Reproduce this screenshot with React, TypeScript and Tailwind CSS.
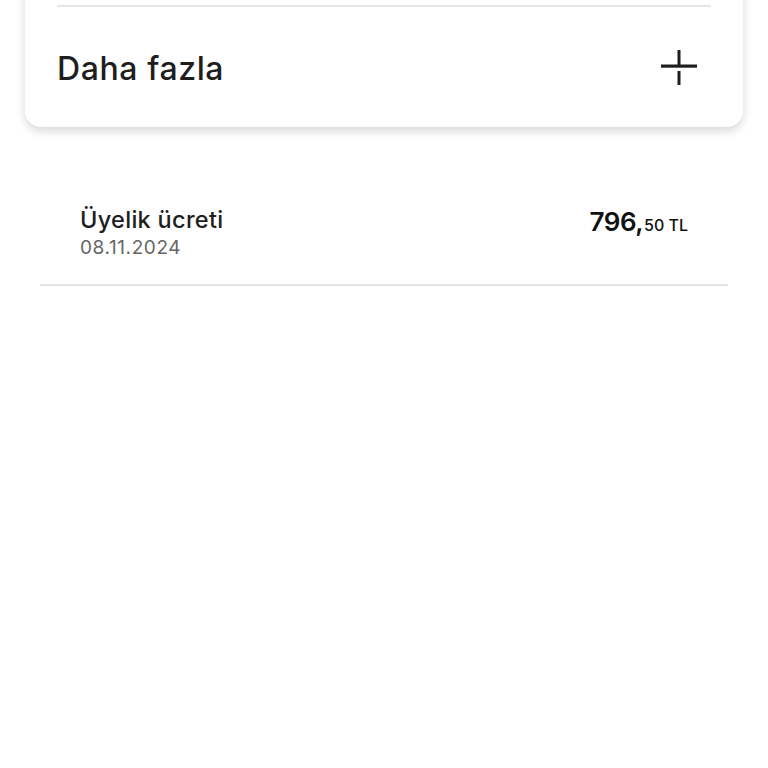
import React from "react";

export default function App() {
  return (
    <div className="w-[768px] h-[768px] bg-white overflow-hidden" style={{ fontFamily: "Inter, 'Noto Sans', sans-serif" }}>
      <div className="px-[25px] -mt-[20px]">
        <div className="bg-white rounded-b-[16px] rounded-t-[16px] shadow-[0_4px_10px_rgba(0,0,0,0.16)] px-[32px] pt-[25px]">
          <div className="h-[2px] bg-[#e6e6e6]" />
          <div className="h-[120px] flex items-center justify-between">
            <span className="text-[32px] font-medium text-[#1e1e1e] tracking-[0.6px] mt-[4px]">Daha fazla</span>
            <svg width="40" height="40" viewBox="0 0 40 40" className="mr-[12px] mt-[4px]">
              <rect x="2" y="15.5" width="36" height="3.2" fill="#1e1e1e" />
              <rect x="18.5" y="1" width="3" height="16" fill="#1e1e1e" />
              <rect x="18.5" y="22" width="3" height="14" fill="#1e1e1e" />
            </svg>
          </div>
        </div>
      </div>
      <div className="px-[40px] mt-[78px]">
        <div className="flex justify-between px-[40px] pb-[23px] border-b-2 border-[#e4e4e4]">
          <div className="flex flex-col">
            <span className="text-[23.5px] font-medium text-[#1e1e1e] leading-[30px] tracking-[0.3px]">Üyelik ücreti</span>
            <span className="text-[19px] text-[#666] leading-[26px] tracking-[0.6px]">08.11.2024</span>
          </div>
          <div className="flex items-baseline pt-[2px]">
            <span className="text-[26px] font-semibold text-[#111] leading-[30px] tracking-[-0.5px]">796,</span>
            <span className="text-[16px] font-medium text-[#111] ml-[1px]">50 TL</span>
          </div>
        </div>
      </div>
    </div>
  );
}
